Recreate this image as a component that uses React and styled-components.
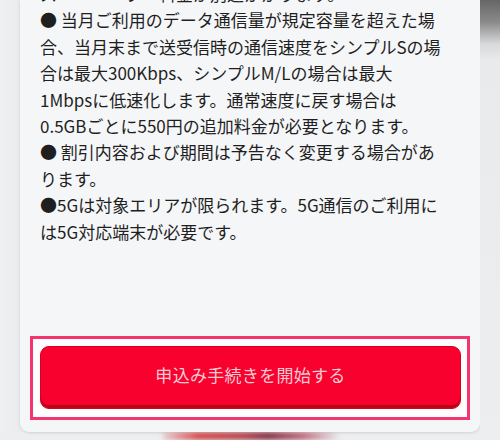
import React from "react";
import styled, { createGlobalStyle } from "styled-components";

const Global = createGlobalStyle`
  html, body { margin: 0; padding: 0; background: #eceef0; }
  body { width: 500px; height: 440px; overflow: hidden; }
  * { box-sizing: border-box; }
`;

const Page = styled.div`
  display: grid;
  grid-template-columns: 20px 460px 20px;
  grid-template-rows: 432px 8px;
  width: 500px;
  height: 440px;
  background: #eceef0;
  font-family: "Noto Sans CJK JP", "Noto Sans", sans-serif;
`;

const LeftGutter = styled.div`
  background: linear-gradient(to right, #eef0f2 0%, #e9ebed 100%);
`;

const RightGutter = styled.div`
  background: linear-gradient(
    to bottom,
    #666 0px,
    #8a8a8a 22px,
    #d8d9db 44px,
    #e9eaec 60px,
    #eceef0 100%
  );
`;

const Card = styled.div`
  background: #f5f6f8;
  border-radius: 0 0 9px 9px;
  box-shadow: 0 1px 3px rgba(0, 0, 0, 0.12);
  display: flex;
  flex-direction: column;
  overflow: hidden;
  padding: 0 10px 12px 10px;
`;

const Notes = styled.div`
  margin-top: -19px;
  padding: 0 10px;
  font-size: 17px;
  line-height: 26.4px;
  color: #1f1f1f;
  white-space: nowrap;
  flex: 1;
`;

const Line = styled.div``;

const Highlight = styled.div`
  height: 84px;
  border: 3px solid #f2356e;
  background: #fdfdfe;
  padding: 7px 6px 8px 7px;
`;

const StartButton = styled.button`
  display: flex;
  align-items: center;
  justify-content: center;
  width: 100%;
  height: 63px;
  border: 1px solid #d8001f;
  border-radius: 9px;
  background: #f8012f;
  box-shadow: inset 0 -3px 0 #b80614;
  color: #f6cbd2;
  font-family: "Noto Sans CJK JP", "Noto Sans", sans-serif;
  font-size: 17px;
  letter-spacing: 0.3px;
  padding: 0 0 6px 0;
  cursor: pointer;
`;

const BlobRow = styled.div`
  grid-column: 1 / 4;
  display: flex;
  justify-content: center;
  overflow: hidden;
`;

const Blob = styled.div`
  width: 175px;
  height: 8px;
  background: linear-gradient(
    to right,
    rgba(220, 90, 90, 0.2) 0%,
    #d45050 20%,
    #b84a55 45%,
    #8a3848 60%,
    #c07080 80%,
    rgba(220, 200, 200, 0.2) 100%
  );
  filter: blur(2px);
`;

const lines = [
  "ス・・・・プ・料金が別途かかります。",
  "● 当月ご利用のデータ通信量が規定容量を超えた場",
  "合、当月末まで送受信時の通信速度をシンプルSの場",
  "合は最大300Kbps、シンプルM/Lの場合は最大",
  "1Mbpsに低速化します。通常速度に戻す場合は",
  "0.5GBごとに550円の追加料金が必要となります。",
  "● 割引内容および期間は予告なく変更する場合があ",
  "ります。",
  "●5Gは対象エリアが限られます。5G通信のご利用に",
  "は5G対応端末が必要です。",
];

export default function App() {
  return (
    <>
      <Global />
      <Page>
        <LeftGutter />
        <Card>
          <Notes>
            {lines.map((l, i) => (
              <Line key={i}>{l}</Line>
            ))}
          </Notes>
          <Highlight>
            <StartButton>申込み手続きを開始する</StartButton>
          </Highlight>
        </Card>
        <RightGutter />
        <BlobRow>
          <Blob />
        </BlobRow>
      </Page>
    </>
  );
}
